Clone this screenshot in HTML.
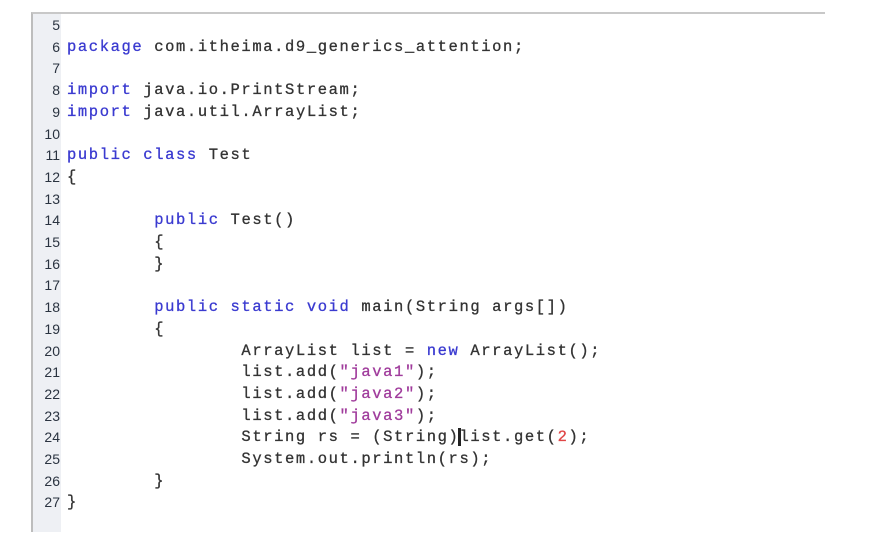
<!DOCTYPE html>
<html><head><style>
body{margin:0;width:879px;height:545px;background:#fff;position:relative;overflow:hidden;font-family:"Liberation Mono",monospace;}
#panel{position:absolute;left:31px;top:12px;width:792px;height:518px;border-left:2px solid #bdbdbd;border-top:2px solid #c8c8c8;background:#fff;}
#gut{position:absolute;left:0;top:0;width:28px;height:518px;background:#eef0f4;}
.l{position:absolute;left:0;height:22px;line-height:22px;white-space:pre;font-size:15.5px;color:#333;}
.n{width:27px;text-align:right;font-family:"Liberation Sans",sans-serif;font-size:14px;color:#2a3340;}
.c{left:34px;letter-spacing:1.6px;-webkit-text-stroke:0.3px currentColor;}
.k{color:#3a3ad0}.s{color:#a03c9c}.r{color:#e04646}
</style></head><body>
<div id="panel"><div id="gut"></div>
<div class="l n" style="top:0px">5</div>
<div class="l n" style="top:21.7px">6</div><div class="l c" style="top:21.7px"><span class="k">package</span> com.itheima.d9_generics_attention;</div>
<div class="l n" style="top:43.4px">7</div>
<div class="l n" style="top:65.1px">8</div><div class="l c" style="top:65.1px"><span class="k">import</span> java.io.PrintStream;</div>
<div class="l n" style="top:86.8px">9</div><div class="l c" style="top:86.8px"><span class="k">import</span> java.util.ArrayList;</div>
<div class="l n" style="top:108.5px">10</div>
<div class="l n" style="top:130.2px">11</div><div class="l c" style="top:130.2px"><span class="k">public class</span> Test</div>
<div class="l n" style="top:151.9px">12</div><div class="l c" style="top:151.9px">{</div>
<div class="l n" style="top:173.6px">13</div>
<div class="l n" style="top:195.3px">14</div><div class="l c" style="top:195.3px">        <span class="k">public</span> Test()</div>
<div class="l n" style="top:217px">15</div><div class="l c" style="top:217px">        {</div>
<div class="l n" style="top:238.7px">16</div><div class="l c" style="top:238.7px">        }</div>
<div class="l n" style="top:260.4px">17</div>
<div class="l n" style="top:282.1px">18</div><div class="l c" style="top:282.1px">        <span class="k">public static void</span> main(String args[])</div>
<div class="l n" style="top:303.8px">19</div><div class="l c" style="top:303.8px">        {</div>
<div class="l n" style="top:325.5px">20</div><div class="l c" style="top:325.5px">                ArrayList list = <span class="k">new</span> ArrayList();</div>
<div class="l n" style="top:347.2px">21</div><div class="l c" style="top:347.2px">                list.add(<span class="s">"java1"</span>);</div>
<div class="l n" style="top:368.9px">22</div><div class="l c" style="top:368.9px">                list.add(<span class="s">"java2"</span>);</div>
<div class="l n" style="top:390.6px">23</div><div class="l c" style="top:390.6px">                list.add(<span class="s">"java3"</span>);</div>
<div class="l n" style="top:412.3px">24</div><div class="l c" style="top:412.3px">                String rs = (String)list.get(<span class="r">2</span>);</div>
<div class="l n" style="top:434px">25</div><div class="l c" style="top:434px">                System.out.println(rs);</div>
<div class="l n" style="top:455.7px">26</div><div class="l c" style="top:455.7px">        }</div>
<div class="l n" style="top:477.4px">27</div><div class="l c" style="top:477.4px">}</div>
<div style="position:absolute;left:425px;top:414px;width:3px;height:18px;background:#222"></div>
</div>
</body></html>
